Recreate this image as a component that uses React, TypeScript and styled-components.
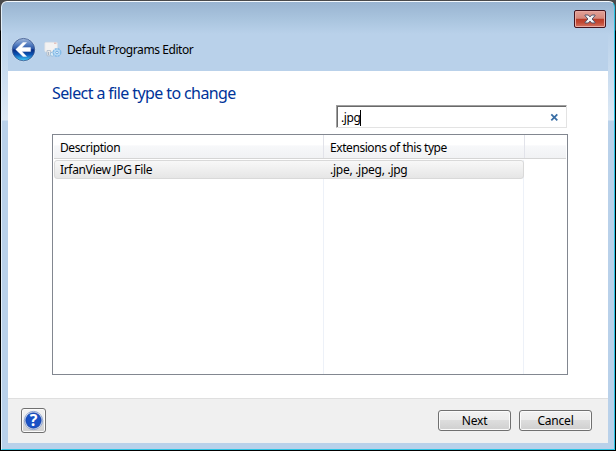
import React from 'react';
import styled, { createGlobalStyle } from 'styled-components';

const GlobalStyle = createGlobalStyle`
  * { box-sizing: border-box; }
  html, body { margin: 0; background: #000; overflow: hidden; }
  body { font: 12px "Noto Sans", "Open Sans", sans-serif; color: #000; }
  svg { display: block; }
`;

const Desktop = styled.div`
  width: 616px;
  height: 451px;
  padding: 1px;
  background: linear-gradient(#4a4a4c 0, #37383b 30px, #000 31px);
`;

const Window = styled.div`
  height: 449px;
  display: flex;
  flex-direction: column;
  padding: 0 6px 6px;
  border: 1px solid #2cc4e4;
  border-top-color: #f4f9fd;
  border-left-color: #e4f0fa;
  border-radius: 6px 6px 0 0;
  background:
    linear-gradient(#b9d1ea00 30px, #dde9f5 118px, #b9d1ea00 119px) left top / 6px 100% no-repeat,
    linear-gradient(#b9d1ea00 30px, #dde9f5 118px, #b9d1ea00 119px) right top / 6px 100% no-repeat,
    linear-gradient(#99b4d1 0, #a9c4de 17px, #b9d1ea 32px);
`;

const TitleBar = styled.header`
  flex: none;
  height: 69px;
  position: relative;
  display: flex;
  align-items: flex-start;
  padding: 35px 0 0 3px;
`;

const Title = styled.span`
  margin: 5px 0 0 5px;
  line-height: 16px;
  letter-spacing: -0.43px;
  white-space: nowrap;
`;

const AppIcon = styled.span`
  margin: 4px 0 0 8px;
`;

const CloseButton = styled.button`
  position: absolute;
  top: 8px;
  right: 2px;
  width: 32px;
  height: 18px;
  padding: 0;
  display: grid;
  place-items: center;
  border: 1px solid #43141e;
  border-radius: 2px;
  box-shadow: inset 0 0 0 1px #e9aaa2;
  background: linear-gradient(#e3a197 0, #d5887c 46%, #b83b27 50%, #c24934 72%, #d47562 100%);
`;

const Body = styled.main`
  flex: 1;
  display: flex;
  flex-direction: column;
  padding: 10px 40px 23px 44px;
  background: #fff;
`;

const Heading = styled.h1`
  margin: 0;
  height: 24px;
  font-size: 16px;
  font-weight: 400;
  line-height: 24px;
  letter-spacing: -0.6px;
  color: #003399;
  white-space: nowrap;
`;

const SearchBox = styled.div`
  align-self: flex-end;
  width: 231px;
  height: 23px;
  margin: 0 1px 6px 0;
  padding: 0 7px 0 4px;
  display: flex;
  align-items: center;
  border: 1px solid #e3e3e3;
  border-top-color: #a0a0a0;
  border-left-color: #a0a0a0;
  box-shadow: inset 1px 1px #696969;
`;

const Query = styled.span`
  height: 16px;
  line-height: 16px;
  margin-top: 2px;
  letter-spacing: -0.4px;
  border-right: 1px solid #000;
`;

const ClearIcon = styled.svg`
  margin: 2px 0 0 auto;
`;

const List = styled.div`
  flex: 1;
  display: flex;
  flex-direction: column;
  padding: 0 1px;
  border: 1px solid #828790;
  background:
    linear-gradient(#edf1f8, #edf1f8) 270px 25px / 1px 100% no-repeat,
    linear-gradient(#edf1f8, #edf1f8) 470px 25px / 1px 100% no-repeat,
    #fff;
`;

const Columns = styled.div`
  display: grid;
  grid-template-columns: 270px 201px 1fr;
`;

const HeaderRow = styled(Columns)`
  height: 24px;
  border-bottom: 1px solid #d5d5d5;
  background: linear-gradient(#fff 45%, #f7f8fa 46%, #f1f2f4);
`;

const HeaderCell = styled.div<{ $spacing?: string }>`
  padding: 5px 0 0 6px;
  line-height: 16px;
  letter-spacing: ${(p) => p.$spacing ?? '0'};
  border-right: 1px solid #e2e3ea;
  &:last-child { border-right-color: transparent; }
`;

const SelectedRow = styled.div`
  width: 470px;
  height: 19px;
  margin-top: 1px;
  display: grid;
  grid-template-columns: 270px 1fr;
  border: 1px solid #d9d9d9;
  border-radius: 3px;
  background: linear-gradient(#f8f8f8, #e6e6e6);
`;

const Cell = styled.span<{ $spacing: string }>`
  padding-left: 5px;
  line-height: 18px;
  letter-spacing: ${(p) => p.$spacing};
`;

const Footer = styled.footer`
  flex: none;
  height: 45px;
  display: flex;
  align-items: center;
  gap: 8px;
  padding: 0 16px 1px 13px;
  border-top: 1px solid #dfdfdf;
  background: #f0f0f0;
`;

const PushButton = styled.button<{ $spacing?: string }>`
  width: 73px;
  height: 21px;
  padding: 0;
  font: inherit;
  line-height: 19px;
  letter-spacing: ${(p) => p.$spacing ?? '0'};
  color: #000;
  border: 1px solid #707070;
  border-radius: 3px;
  box-shadow: inset 0 0 0 1px #fbfbfb;
  background: linear-gradient(#f2f2f2 0, #ebebeb 49%, #dddddd 50%, #cfcfcf 100%);
`;

const HelpButton = styled(PushButton)`
  width: 25px;
  height: 25px;
  margin-right: auto;
  display: grid;
  place-items: center;
`;

const QuestionMark = styled.text`
  font: bold 16px "Open Sans", "Noto Sans", sans-serif;
  fill: #fff;
`;

const BackIcon = () => (
  <svg width="25" height="26" viewBox="0 0 25 26">
    <defs>
      <linearGradient id="orb" x2="0" y2="1">
        <stop offset="0" stopColor="#a3b8da" />
        <stop offset=".3" stopColor="#4f79be" />
        <stop offset=".49" stopColor="#2450a4" />
        <stop offset=".5" stopColor="#07297f" />
        <stop offset=".72" stopColor="#0b55b4" />
        <stop offset="1" stopColor="#45d2fb" />
      </linearGradient>
    </defs>
    <circle cx="12.5" cy="12.6" r="11.9" fill="#dbe8f6" />
    <circle cx="12.5" cy="12.6" r="11.2" fill="url(#orb)" stroke="#36548b" strokeWidth=".8" />
    <path d="M4.7 12.5 12 5.5h3.6l-4.7 5.1h8.7v3.8h-8.7l4.7 5.1H12z" fill="#fff" stroke="#fff" strokeWidth=".4" />
  </svg>
);

const ProgramsIcon = () => (
  <svg width="18" height="17" viewBox="0 0 18 17">
    <rect x=".8" y="1.3" width="12.6" height="9.7" rx="1.2" fill="#f3f2f2" stroke="#dcdfe4" strokeWidth=".7" />
    <path d="M10 2.2h2.4" stroke="#dfaea9" />
    <path d="M3 9.5h3.6v5.3H3z" fill="#e9eaec" stroke="#a9b5c3" strokeWidth=".7" />
    <path d="M4.6 11v3" stroke="#a3b1c2" />
    <circle cx="8.3" cy="13.2" r="2" fill="#deedf6" stroke="#8fbadc" strokeWidth=".8" />
    <circle cx="13" cy="11.5" r="3.5" fill="#c6e4fa" stroke="#86bce8" strokeWidth="2" strokeDasharray="2.1 .65" />
    <circle cx="13" cy="11.5" r="2.9" fill="#b8dcf8" />
    <circle cx="13" cy="11.5" r="1.3" fill="#eef7fd" stroke="#659ed4" strokeWidth=".8" />
  </svg>
);

const CloseIcon = () => (
  <svg width="12" height="10" viewBox="0 0 12 10">
    <path
      d="M1 1h3.3L6 2.9 7.7 1H11v.7L8.1 5l2.9 3.3V9H7.7L6 7.1 4.3 9H1v-.7L3.9 5 1 1.7z"
      fill="#f3f3f5"
      stroke="#555469"
    />
  </svg>
);

const HelpIcon = () => (
  <svg width="21" height="21" viewBox="0 0 21 21">
    <circle cx="10.5" cy="10.5" r="9.1" fill="#fff" stroke="#7490c8" strokeWidth=".8" />
    <circle cx="10.5" cy="10.5" r="7.8" fill="#1951c5" stroke="#123d9f" strokeWidth=".7" />
    <QuestionMark x="10.5" y="16.2" textAnchor="middle">?</QuestionMark>
  </svg>
);

export default function App() {
  return (
    <>
      <GlobalStyle />
      <Desktop>
        <Window>
          <TitleBar>
            <BackIcon />
            <AppIcon><ProgramsIcon /></AppIcon>
            <Title>Default Programs Editor</Title>
            <CloseButton aria-label="Close"><CloseIcon /></CloseButton>
          </TitleBar>
          <Body>
            <Heading>Select a file type to change</Heading>
            <SearchBox>
              <Query>.jpg</Query>
              <ClearIcon width="9" height="9" viewBox="0 0 9 9">
                <path d="m1.3 1.3 6 6M7.3 1.3l-6 6" stroke="#396ea5" strokeWidth="1.8" />
              </ClearIcon>
            </SearchBox>
            <List>
              <HeaderRow>
                <HeaderCell $spacing="-0.4px">Description</HeaderCell>
                <HeaderCell $spacing="-0.43px">Extensions of this type</HeaderCell>
                <HeaderCell />
              </HeaderRow>
              <SelectedRow>
                <Cell $spacing="-0.34px">IrfanView JPG File</Cell>
                <Cell $spacing="-0.27px">.jpe, .jpeg, .jpg</Cell>
              </SelectedRow>
            </List>
          </Body>
          <Footer>
            <HelpButton aria-label="Help"><HelpIcon /></HelpButton>
            <PushButton $spacing="-0.2px">Next</PushButton>
            <PushButton $spacing="-0.2px">Cancel</PushButton>
          </Footer>
        </Window>
      </Desktop>
    </>
  );
}
